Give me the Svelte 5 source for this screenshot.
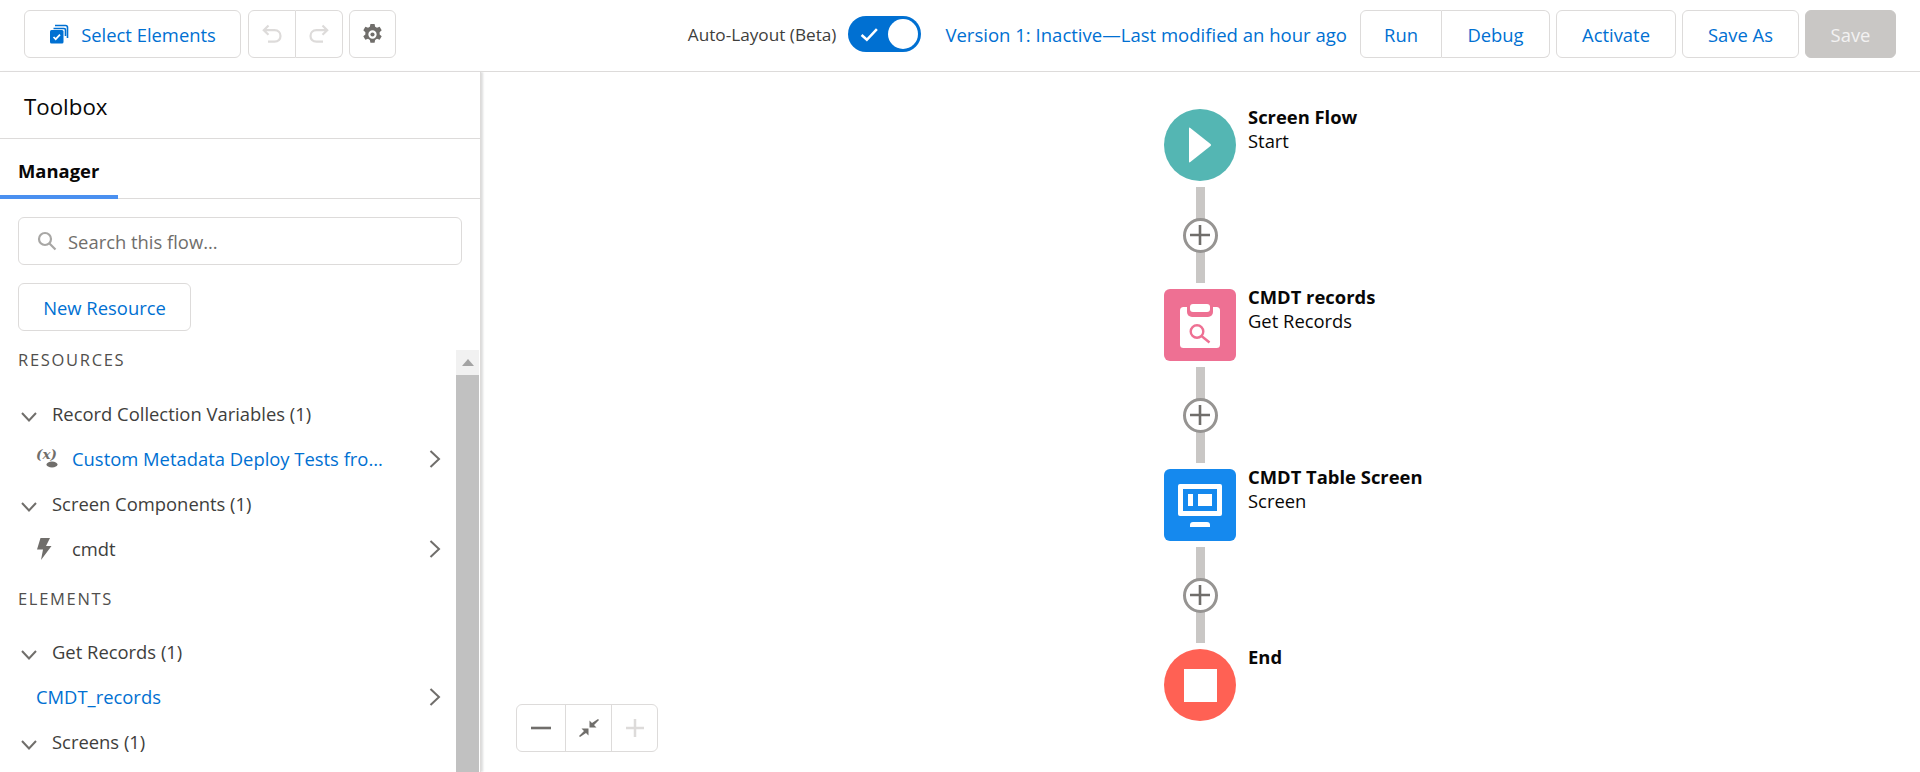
<script>
  const flow = [
    { title: "Screen Flow", sub: "Start", kind: "start" },
    { title: "CMDT records", sub: "Get Records", kind: "records" },
    { title: "CMDT Table Screen", sub: "Screen", kind: "screen" },
    { title: "End", sub: "", kind: "end" }
  ];
</script>

<div class="page">
  <header class="topbar">
    <div class="tools">
      <button class="btn select">
        <svg viewBox="0 0 20 20" width="20" height="20">
          <path d="M6 1.500h10.500q2 0 2 2V14" fill="none" stroke="#0070d2" stroke-width="1.600" />
          <path d="M4.500 4.500h10.500q1.500 0 1.500 1.500V12" fill="none" stroke="#0070d2" stroke-width="1.600" />
          <rect x="1" y="6" width="13.500" height="13.500" rx="1.500" fill="#0070d2" />
          <path d="M4.500 13l2.200 2.200 4.300-4.600" fill="none" stroke="#fff" stroke-width="1.700" />
        </svg>
        Select Elements
      </button>
      <div class="group">
        <button class="btn icon-btn">
          <svg viewBox="0 0 20 20" width="20" height="20" fill="none" stroke="#dddbda" stroke-width="2.200">
            <path d="M6.500 1.500L1.800 6.200l4.700 4.500M2 6.200h10.500c8 0 8 11.500 0 11.500H6" />
          </svg>
        </button>
        <button class="btn icon-btn">
          <svg viewBox="0 0 20 20" width="20" height="20" fill="none" stroke="#dddbda" stroke-width="2.200">
            <path d="M13.500 1.500l4.700 4.700-4.700 4.500M18 6.200H7.500c-8 0-8 11.500 0 11.500H14" />
          </svg>
        </button>
      </div>
      <button class="btn icon-btn solo">
        <svg viewBox="0 0 20 20" width="23" height="23">
          <path fill="#706e6b" fill-rule="evenodd" d="M8.200 0.800h3.600l.5 2.400 1.600.9 2.300-.8 1.800 3.100-1.800 1.600v1.900l1.800 1.600-1.800 3.100-2.300-.8-1.600.9-.5 2.400H8.200l-.5-2.400-1.600-.9-2.300.8-1.800-3.100 1.800-1.600V8l-1.800-1.600 1.800-3.100 2.300.8 1.600-.9zM10 6.400a3.600 3.600 0 1 0 0 7.200 3.600 3.600 0 0 0 0-7.200z" />
          <circle cx="10" cy="10" r="1.800" fill="#706e6b" />
        </svg>
      </button>
    </div>

    <div class="actions">
      <span class="auto-label">Auto-Layout (Beta)</span>
      <span class="toggle">
        <svg viewBox="0 0 18 14" width="19" height="15" fill="none" stroke="#fff" stroke-width="2.400">
          <path d="M1.500 7.500l5 4.500 9.500-10" />
        </svg>
        <span class="knob"></span>
      </span>
      <span class="version">Version 1: Inactive—Last modified an hour ago</span>
      <div class="group run">
        <button class="btn">Run</button>
        <button class="btn">Debug</button>
      </div>
      <button class="btn activate">Activate</button>
      <button class="btn save-as">Save As</button>
      <button class="btn save">Save</button>
    </div>
  </header>

  <div class="body">
    <aside class="sidebar">
      <h2 class="toolbox">Toolbox</h2>
      <div class="tabs"><span class="tab">Manager</span></div>
      <div class="controls">
        <div class="search">
          <svg viewBox="0 0 20 20" width="20" height="20" fill="none" stroke="#a8a7a5" stroke-width="2.200">
            <circle cx="8" cy="8" r="6" />
            <path d="M12.500 12.500l6 6" />
          </svg>
          <span>Search this flow...</span>
        </div>
        <button class="btn new-resource">New Resource</button>
      </div>
      <div class="scroller">
        <div class="list">
          <h3>RESOURCES</h3>
          <div class="row group-row first">
            <svg class="chev" viewBox="0 0 16 10" width="16" height="10"><path d="M1 1l7 7.500L15 1" /></svg>
            Record Collection Variables (1)
          </div>
          <div class="row item">
            <span class="var-icon">
              <svg viewBox="0 -3 28 28" width="28" height="28">
                <text x="0" y="11" class="var-text">(x)</text>
                <ellipse cx="16" cy="16.500" rx="5.500" ry="3" fill="#706e6b" />
              </svg>
            </span>
            <span class="link">Custom Metadata Deploy Tests fro...</span>
            <svg class="more" viewBox="0 0 12 18" width="12" height="18"><path d="M1.500 1l8.500 8-8.500 8" /></svg>
          </div>
          <div class="row group-row">
            <svg class="chev" viewBox="0 0 16 10" width="16" height="10"><path d="M1 1l7 7.500L15 1" /></svg>
            Screen Components (1)
          </div>
          <div class="row item">
            <span class="var-icon">
              <svg viewBox="0 0 16 22" width="16" height="22"><path fill="#706e6b" d="M4.500 0h9.500L10 8h5.500L5 22l2-10.500H1z" /></svg>
            </span>
            <span class="plain">cmdt</span>
            <svg class="more" viewBox="0 0 12 18" width="12" height="18"><path d="M1.500 1l8.500 8-8.500 8" /></svg>
          </div>
          <h3 class="elements">ELEMENTS</h3>
          <div class="row group-row first">
            <svg class="chev" viewBox="0 0 16 10" width="16" height="10"><path d="M1 1l7 7.500L15 1" /></svg>
            Get Records (1)
          </div>
          <div class="row item">
            <span class="link">CMDT_records</span>
            <svg class="more" viewBox="0 0 12 18" width="12" height="18"><path d="M1.500 1l8.500 8-8.500 8" /></svg>
          </div>
          <div class="row group-row">
            <svg class="chev" viewBox="0 0 16 10" width="16" height="10"><path d="M1 1l7 7.500L15 1" /></svg>
            Screens (1)
          </div>
        </div>
        <div class="scrollbar">
          <div class="arrow"></div>
          <div class="thumb"></div>
        </div>
      </div>
    </aside>

    <main class="canvas">
      <div class="flow">
        {#each flow as step, i}
          <div class="node-row">
            <div class="node {step.kind}">
              {#if step.kind === "start"}
                <svg viewBox="0 0 22 36" width="22" height="36"><path fill="#fff" d="M0 1.500v33q0 1.500 1.300.6L21.500 19q1-1 0-2L1.300.9Q0 0 0 1.500z" /></svg>
              {:else if step.kind === "records"}
                <svg viewBox="0 0 40 46" width="40" height="46">
                  <rect x="0" y="5" width="40" height="41" rx="3.500" fill="#fff" />
                  <rect x="7" y="0" width="26" height="15" rx="5" fill="#ee7093" />
                  <rect x="10" y="2" width="20" height="8" rx="3" fill="#fff" />
                  <circle cx="17" cy="29.500" r="6.300" fill="none" stroke="#ee7093" stroke-width="2.400" />
                  <path d="M21.500 34l8 6.500" stroke="#ee7093" stroke-width="2.400" />
                </svg>
              {:else if step.kind === "screen"}
                <svg viewBox="0 0 44 43" width="44" height="43">
                  <rect x="0" y="0" width="44" height="32" rx="2" fill="#fff" />
                  <rect x="5" y="5" width="34" height="22" fill="#1589ee" />
                  <rect x="10" y="10" width="5" height="12" fill="#fff" />
                  <rect x="20" y="10" width="14" height="12" fill="#fff" />
                  <path d="M12 43v-2q0-3 3-3h14q3 0 3 3v2z" fill="#fff" />
                </svg>
              {:else}
                <span class="stop"></span>
              {/if}
            </div>
            <div class="label">
              <strong>{step.title}</strong>
              {#if step.sub}<span>{step.sub}</span>{/if}
            </div>
          </div>
          {#if i < flow.length - 1}
            <div class="connector">
              <span class="add">
                <svg viewBox="0 0 20 20" width="20" height="20"><path d="M10 0v20M0 10h20" stroke="#706e6b" stroke-width="2.600" /></svg>
              </span>
            </div>
          {/if}
        {/each}
      </div>

      <div class="zoom">
        <button>
          <svg viewBox="0 0 20 4" width="20" height="4"><path d="M0 2h20" stroke="#706e6b" stroke-width="2.600" /></svg>
        </button>
        <button>
          <svg viewBox="0 0 20 20" width="20" height="20" fill="#706e6b">
            <path d="M19 1l1 1-5 5 2.500 2.500H10.500V2.500L13 5zM1 19l-1-1 5-5-2.500-2.500h7v7L7 15z" />
          </svg>
        </button>
        <button>
          <svg viewBox="0 0 20 20" width="18" height="18"><path d="M10 0v20M0 10h20" stroke="#dddbda" stroke-width="2.800" /></svg>
        </button>
      </div>
    </main>
  </div>
</div>

<style>
  :global(body) {
    margin: 0;
    background: #fff;
  }

  .page {
    height: 772px;
    overflow: hidden;
    display: flex;
    flex-direction: column;
    font-family: "Open Sans", "Noto Sans", sans-serif;
    font-size: 18.400px;
    color: #080707;
  }

  button {
    font: inherit;
  }

  .topbar {
    flex: none;
    height: 72px;
    box-sizing: border-box;
    border-bottom: 1px solid #dddbda;
    display: flex;
    justify-content: space-between;
    align-items: flex-start;
    padding: 10px 24px 0;
  }

  .tools,
  .actions {
    display: flex;
    align-items: center;
    height: 48px;
  }

  .tools {
    gap: 6px;
  }

  .btn {
    height: 48px;
    box-sizing: border-box;
    background: #fff;
    border: 1px solid #dddbda;
    border-radius: 6px;
    color: #0070d2;
    display: inline-flex;
    align-items: center;
    justify-content: center;
    padding: 0;
    white-space: nowrap;
  }

  .select {
    width: 217px;
    gap: 12px;
    margin-right: 1px;
  }

  .group {
    display: flex;
  }

  .group .btn {
    border-radius: 0;
  }

  .group .btn:first-child {
    border-radius: 6px 0 0 6px;
  }

  .group .btn:last-child {
    border-radius: 0 6px 6px 0;
    border-left: 0;
  }

  .icon-btn {
    width: 48px;
  }

  .group .icon-btn:last-child,
  .solo {
    width: 47px;
  }

  .auto-label {
    color: #3e3e3c;
    font-size: 17.200px;
    margin-right: 12px;
  }

  .toggle {
    width: 73px;
    height: 36px;
    border-radius: 18px;
    background: #0070d2;
    display: flex;
    align-items: center;
    justify-content: space-between;
    padding: 0 3px 0 12px;
    box-sizing: border-box;
    margin-right: 24px;
  }

  .knob {
    width: 30px;
    height: 30px;
    border-radius: 50%;
    background: #fff;
  }

  .version {
    color: #0070d2;
    font-size: 18.550px;
    margin-right: 13px;
  }

  .run .btn:first-child {
    width: 82px;
  }

  .run .btn:last-child {
    width: 108px;
  }

  .activate {
    width: 120px;
    margin-left: 6px;
  }

  .save-as {
    width: 117px;
    margin-left: 6px;
  }

  .save {
    width: 91px;
    margin-left: 6px;
    background: #c9c7c5;
    border-color: #c9c7c5;
    color: #f3f2f2;
  }

  .body {
    flex: 1;
    min-height: 0;
    display: flex;
  }

  .sidebar {
    width: 480px;
    flex: none;
    display: flex;
    flex-direction: column;
    box-shadow: 2px 0 2px #ddd;
    border-right: 1px solid #dddbda;
  }

  .toolbox {
    margin: 0;
    height: 67px;
    box-sizing: border-box;
    border-bottom: 1px solid #dddbda;
    padding: 3px 0 0 24px;
    font-size: 22.300px;
    font-weight: 400;
    line-height: 63px;
    flex: none;
  }

  .tabs {
    height: 60px;
    flex: none;
    box-sizing: border-box;
    border-bottom: 1px solid #dddbda;
  }

  .tab {
    display: block;
    width: 118px;
    height: 60px;
    box-sizing: border-box;
    padding-left: 18px;
    font-weight: 700;
    line-height: 64px;
    border-bottom: 4px solid #4a90f0;
  }

  .controls {
    flex: none;
    padding: 18px 18px 19px 18px;
    display: flex;
    flex-direction: column;
    gap: 18px;
    align-items: flex-start;
  }

  .search {
    width: 100%;
    height: 48px;
    box-sizing: border-box;
    border: 1px solid #dddbda;
    border-radius: 6px;
    display: flex;
    align-items: center;
    gap: 11px;
    padding-left: 18px;
    color: #706e6b;
  }

  .new-resource {
    width: 173px;
  }

  .scroller {
    flex: 1;
    min-height: 0;
    display: flex;
  }

  .list {
    flex: 1;
    min-width: 0;
    padding-left: 18px;
  }

  h3 {
    margin: 0;
    font-size: 16.500px;
    font-weight: 400;
    letter-spacing: 1.700px;
    color: #514f4d;
    line-height: 18px;
    padding-top: 1px;
  }

  h3.elements {
    margin-top: 18px;
  }

  .row {
    display: flex;
    align-items: center;
    height: 45px;
    color: #3e3e3c;
    white-space: nowrap;
  }

  .first {
    margin-top: 22px;
  }

  .elements + .first {
    margin-top: 21px;
  }

  .group-row {
    gap: 15px;
    padding-left: 3px;
  }

  .chev {
    flex: none;
    margin-top: 6px;
  }

  .chev path,
  .more path {
    fill: none;
    stroke: #706e6b;
    stroke-width: 2;
  }

  .item {
    padding-left: 18px;
    padding-right: 15px;
  }

  .var-icon {
    width: 36px;
    flex: none;
    display: flex;
  }

  .var-text {
    font-size: 13.500px;
    font-weight: 700;
    font-style: italic;
    fill: #706e6b;
    font-family: "DejaVu Serif", serif;
  }

  .link {
    color: #0070d2;
  }

  .plain {
    color: #3e3e3c;
  }

  .more {
    margin-left: auto;
    flex: none;
  }

  .scrollbar {
    width: 23px;
    margin-right: 1px;
    flex: none;
    background: #f1f1f1;
    display: flex;
    flex-direction: column;
    align-items: center;
  }

  .arrow {
    width: 0;
    height: 7px;
    flex: none;
    box-sizing: border-box;
    border-left: 6px solid transparent;
    border-right: 6px solid transparent;
    border-bottom: 7px solid #a3a3a3;
    margin: 9px 0;
  }

  .thumb {
    flex: 1;
    width: 100%;
    background: #c1c1c1;
  }

  .canvas {
    flex: 1;
    position: relative;
    min-width: 0;
  }

  .flow {
    padding: 37px 0 0 683px;
  }

  .node-row {
    display: flex;
    gap: 12px;
    height: 72px;
  }

  .node {
    width: 72px;
    height: 72px;
    flex: none;
    border-radius: 6px;
    display: flex;
    align-items: center;
    justify-content: center;
  }

  .start {
    background: #54b6b3;
    border-radius: 50%;
  }

  .records {
    background: #ee7093;
  }

  .screen {
    background: #1589ee;
  }

  .end {
    background: #ff6154;
    border-radius: 50%;
  }

  .stop {
    width: 33px;
    height: 33px;
    background: #fff;
  }

  .label {
    display: flex;
    flex-direction: column;
    line-height: 24px;
    margin-top: -4px;
  }

  .label strong {
    font-weight: 700;
  }

  .connector {
    width: 9px;
    height: 96px;
    margin: 6px 0 6px 32px;
    background: #c9c7c5;
    display: flex;
    align-items: center;
    justify-content: center;
  }

  .add {
    width: 35px;
    height: 35px;
    flex: none;
    margin-left: -1px;
    box-sizing: border-box;
    border: 3px solid #969492;
    border-radius: 50%;
    background: #fff;
    display: flex;
    align-items: center;
    justify-content: center;
  }

  .zoom {
    position: absolute;
    left: 35px;
    bottom: 20px;
    display: flex;
    height: 48px;
    box-sizing: border-box;
    border: 1px solid #dddbda;
    border-radius: 6px;
    background: #fff;
  }

  .zoom button {
    width: 46px;
    background: none;
    border: 0;
    border-left: 1px solid #dddbda;
    padding: 0;
    display: flex;
    align-items: center;
    justify-content: center;
  }

  .zoom button:first-child {
    border-left: 0;
    width: 48px;
  }
</style>
